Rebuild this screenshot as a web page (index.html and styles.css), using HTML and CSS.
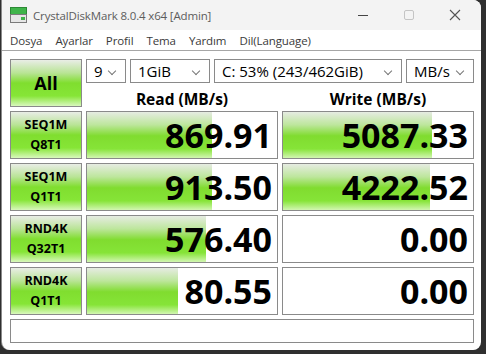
FILE: index.html
```html
<!DOCTYPE html>
<html lang="tr">
<head>
    <meta charset="UTF-8">
    <title>CrystalDiskMark 8.0.4 x64 [Admin]</title>
    <link rel="stylesheet" href="styles.css">
</head>
<body>
<div class="window">

    <!-- Title bar -->
    <div class="titlebar">
        <svg class="app-icon" width="17" height="16" viewBox="0 0 17 16">
            <rect x="0.5" y="0.5" width="16" height="7" fill="#3fb44a" stroke="#2c8a35"/>
            <rect x="0.5" y="7.5" width="16" height="8" fill="#e6e6e6" stroke="#7a7a7a"/>
            <rect x="11" y="10" width="4" height="3" fill="#3fb44a"/>
        </svg>
        <span class="title">CrystalDiskMark 8.0.4 x64 [Admin]</span>
        <div class="controls">
            <svg class="ctl" width="46" height="30" viewBox="0 0 46 30">
                <line x1="18" y1="15.5" x2="28" y2="15.5" stroke="#444" stroke-width="1"/>
            </svg>
            <svg class="ctl" width="46" height="30" viewBox="0 0 46 30">
                <rect x="18.5" y="10.5" width="9" height="9" rx="1.5" fill="none" stroke="#c4c4c4" stroke-width="1"/>
            </svg>
            <svg class="ctl" width="46" height="30" viewBox="0 0 46 30">
                <path d="M18 10 L28 20 M28 10 L18 20" stroke="#555" stroke-width="1.1"/>
            </svg>
        </div>
    </div>

    <!-- Menu bar -->
    <div class="menubar">
        <span>Dosya</span>
        <span>Ayarlar</span>
        <span>Profil</span>
        <span>Tema</span>
        <span>Yardım</span>
        <span>Dil(Language)</span>
    </div>

    <div class="content">
        <div class="grid">
            <div class="btn btn-all">All</div>

            <div class="top">
                <div class="combos">
                    <div class="combo c-count">9<i></i></div>
                    <div class="combo c-size">1GiB<i></i></div>
                    <div class="combo c-drive">C: 53% (243/462GiB)<i></i></div>
                    <div class="combo c-unit">MB/s<i></i></div>
                </div>
                <div class="headers">
                    <div class="head">Read (MB/s)</div>
                    <div class="head">Write (MB/s)</div>
                </div>
            </div>

            <div class="btn">SEQ1M<br>Q8T1</div>
            <div class="val" style="background-size: 125px 100%">869.91</div>
            <div class="val" style="background-size: 149px 100%">5087.33</div>

            <div class="btn">SEQ1M<br>Q1T1</div>
            <div class="val" style="background-size: 125px 100%">913.50</div>
            <div class="val" style="background-size: 147px 100%">4222.52</div>

            <div class="btn">RND4K<br>Q32T1</div>
            <div class="val" style="background-size: 119px 100%">576.40</div>
            <div class="val" style="background-size: 0 100%">0.00</div>

            <div class="btn">RND4K<br>Q1T1</div>
            <div class="val" style="background-size: 91px 100%">80.55</div>
            <div class="val" style="background-size: 0 100%">0.00</div>

            <div class="comment"></div>
        </div>
    </div>
</div>
</body>
</html>
```

FILE: styles.css
```css
body {
    margin: 0;
    background-color: #2f2f2f;
    font-family: 'Open Sans', 'Noto Sans', sans-serif;
    color: #000;
}

.window {
    margin-left: 2px;
    width: 479px;
    height: 350px;
    background-color: #fff;
    border-radius: 0 8px 8px 8px;
    overflow: hidden;
    box-shadow: -1px 0 0 #8a8a8a;
}

.titlebar {
    height: 30px;
    background-color: #f3f3f3;
    display: flex;
    align-items: center;
}

.app-icon {
    margin-left: 8px;
    margin-right: 6px;
}

.title {
    font-size: 11.5px;
    color: #5c5c5c;
    letter-spacing: -0.15px;
}

.controls {
    margin-left: auto;
    display: flex;
    margin-right: 3px;
}

.menubar {
    height: 20px;
    display: flex;
    align-items: center;
    gap: 13px;
    padding-left: 8px;
    font-size: 11.5px;
    color: #3a3a3a;
    letter-spacing: -0.1px;
    border-bottom: 1px solid #a6a6a6;
}

.content {
    padding: 8px 0 0 8px;
}

.grid {
    display: grid;
    grid-template-columns: 72px 192px 192px;
    grid-template-rows: 48px 48px 48px 48px 48px 24px;
    gap: 4px;
}

.btn {
    box-sizing: border-box;
    border: 1px solid #8a8a8a;
    background: linear-gradient(to bottom, #e9ede6 0%, #b9e496 28%, #80de2f 50%, #86e536 78%, #d9f8bd 100%);
    font-weight: bold;
    font-size: 12.5px;
    line-height: 20px;
    text-align: center;
    display: flex;
    align-items: center;
    justify-content: center;
}

.btn-all {
    font-size: 18px;
}

.top {
    grid-column: 2 / 4;
    display: flex;
    flex-direction: column;
}

.combos {
    display: flex;
    gap: 4px;
    height: 24px;
}

.combo {
    box-sizing: border-box;
    border: 1px solid #8a8a8a;
    font-size: 15px;
    line-height: 22px;
    padding-left: 7px;
    position: relative;
    white-space: nowrap;
}

.combo i {
    position: absolute;
    right: 10px;
    top: 8px;
    width: 5px;
    height: 5px;
    border-right: 1px solid #777;
    border-bottom: 1px solid #777;
    transform: rotate(45deg);
}

.c-count { width: 40px; }
.c-size { width: 80px; }
.c-drive { width: 188px; }
.c-unit { width: 68px; }

.headers {
    display: flex;
    gap: 4px;
    flex: 1;
    align-items: flex-end;
}

.head {
    width: 192px;
    text-align: center;
    font-weight: bold;
    font-size: 15.5px;
    line-height: 20px;
    margin-bottom: -2px;
}

.val {
    box-sizing: border-box;
    border: 1px solid #8a8a8a;
    background-color: #fff;
    background-image: linear-gradient(to bottom, #e6ece2 0%, #bde69c 28%, #80dc2f 52%, #86e438 80%, #d2f6b2 100%);
    background-repeat: no-repeat;
    background-position: left top;
    font-weight: bold;
    font-size: 34px;
    text-align: right;
    padding-right: 5px;
    line-height: 46px;
}

.comment {
    grid-column: 1 / 4;
    border: 1px solid #8a8a8a;
}
```
